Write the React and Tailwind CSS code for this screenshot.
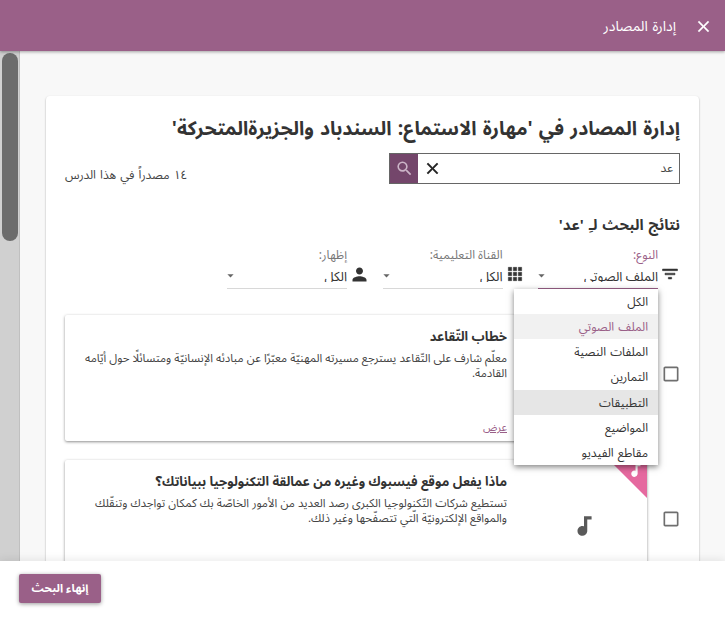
import React from "react";
import { MdSearch, MdPerson, MdAudiotrack, MdArrowDropDown, MdCheckBoxOutlineBlank } from "react-icons/md";

const options = ["الكل", "الملف الصوتي", "الملفات النصية", "التمارين", "التطبيقات", "المواضيع", "مقاطع الفيديو"];

function Icon({ d, size = 20, weight = 0.6, className = "" }) {
  return (
    <svg viewBox="0 0 24 24" width={size} height={size} fill="currentColor" stroke="currentColor" strokeWidth={weight} className={className}>
      <path d={d} />
    </svg>
  );
}

const CLOSE = "M19 6.41 17.59 5 12 10.59 6.41 5 5 6.41 10.59 12 5 17.59 6.41 19 12 13.41 17.59 19 19 17.59 13.41 12z";
const FILTER = "M10 18h4v-2h-4v2zM3 6v2h18V6H3zm3 7h12v-2H6v2z";
const APPS = "M4 8h4V4H4v4zm6 12h4v-4h-4v4zm-6 0h4v-4H4v4zm0-6h4v-4H4v4zm6 0h4v-4h-4v4zm6-10v4h4V4h-4zm-6 4h4V4h-4v4zm6 6h4v-4h-4v4zm0 6h4v-4h-4v4z";

function Filter({ icon, label, value, active, children }) {
  return (
    <div className="flex items-start gap-[2px]">
      <div className="mt-[19px] w-[20px] text-[#333]">{icon}</div>
      <div className="relative w-[120px]">
        <div className={`h-[19px] pt-px text-[12px] leading-[19px] whitespace-nowrap ${active ? "text-[#9a6088]" : "text-[#777]"}`}>{label}</div>
        <div className={`flex h-[25px] items-start justify-between border-b ${active ? "border-[#9a6088]" : "border-[#d8d8d8]"}`}>
          <span className="h-[18px] overflow-hidden text-[13px] leading-[26px] whitespace-nowrap text-[#333]">{value}</span>
          <MdArrowDropDown size={15} className="mt-[4px] -ml-[4px] text-[#666]" />
        </div>
        {children}
      </div>
    </div>
  );
}

function Resource({ title, lines, link }) {
  return (
    <div className="flex h-[126px] items-center justify-between">
      <MdCheckBoxOutlineBlank size={20} className="mb-[9px] -mr-px text-[#6f6f6f]" />
      <div className="relative flex h-full w-[582px] rounded-[2px] bg-white shadow-[0_1px_3px_rgba(0,0,0,0.45)]">
        <div className="flex w-[140px] items-center justify-center pt-[6px] pl-[13px]">
          <MdAudiotrack size={26} className="text-[#5a5a5a]" />
        </div>
        <div className="absolute top-0 right-0 h-[38px] w-[38px] bg-[#e5699f] [clip-path:polygon(0_0,100%_0,100%_100%)]">
          <MdAudiotrack size={17} className="absolute top-[2px] right-[3px] text-white" />
        </div>
        <div className="flex flex-1 flex-col pt-[11px]">
          <h3 className="text-[13px] leading-[22px] font-bold whitespace-nowrap text-[#333]">{title}</h3>
          <p className="pt-[3px] text-[11.5px] leading-[14.5px] whitespace-nowrap text-[#444] [word-spacing:0.15px]">
            {lines.map((l) => <span key={l} className="block">{l}</span>)}
          </p>
          <a className="mt-auto mb-[6px] text-[11px] leading-[15px] text-[#9a6088] underline">{link}</a>
        </div>
      </div>
    </div>
  );
}

export default function App() {
  return (
    <div className="flex h-[619px] w-[725px] flex-col overflow-hidden bg-white font-['Noto_Sans_Arabic','Noto_Sans','Open_Sans',sans-serif]">
      <header dir="rtl" className="z-10 flex h-[51px] shrink-0 items-center gap-[18px] bg-[#9a6088] pt-px pr-[12px] text-white shadow-[0_1px_3px_rgba(0,0,0,0.35)]">
        <Icon d={CLOSE} size={19} weight={0.4} />
        <span className="pt-px text-[14px] leading-[22px] [word-spacing:1px]">إدارة المصادر</span>
      </header>
      <div className="flex h-[510px] shrink-0 overflow-hidden">
        <div className="w-[20px] border-r border-[#c0c0c0] bg-[#d0d0d0] pt-[2px] pl-[2px]">
          <div className="h-[188px] w-[16px] rounded-full bg-[#6c6c6c]" />
        </div>
        <main dir="rtl" className="flex-1 bg-[#f8f8f8] px-[26px] pt-[45px]">
          <section className="h-[520px] rounded-[4px] bg-white px-[19px] pt-[17px] shadow-[0_1px_2px_rgba(0,0,0,0.35)]">
            <h1 className="h-[40px] text-[19.4px] leading-[32px] font-bold whitespace-nowrap text-[#333] [word-spacing:1.1px]">إدارة المصادر في 'مهارة الاستماع: السندباد والجزيرةالمتحركة'</h1>
            <div className="flex h-[31px] justify-between">
              <div className="flex h-[31px] w-[291px] items-center border border-[#666] pr-[6px]">
                <span className="flex-1 pt-px text-[12px] text-[#444]">عد</span>
                <Icon d={CLOSE} size={19} weight={0.7} className="ml-[5px] text-[#222]" />
                <div className="flex h-full w-[28px] items-center justify-center bg-[#74466b] pl-px text-[#ccb5c8]"><MdSearch size={19} /></div>
              </div>
              <span className="pt-[13px] text-[12px] leading-[20px] whitespace-nowrap text-[#444] [word-spacing:1px]">١٤ مصدراً في هذا الدرس</span>
            </div>
            <h2 className="mt-[29px] h-[32px] text-[15px] leading-[25px] font-bold text-[#333] [word-spacing:1px]">نتائج البحث لـِ 'عد'</h2>
            <div className="flex h-[70px] gap-[13.5px]">
              <Filter icon={<Icon d={FILTER} />} label="النوع:" value="الملف الصوتي" active>
                <ul className="absolute top-[44px] right-0 z-20 w-[144px] bg-white shadow-[0_2px_6px_rgba(0,0,0,0.5)]">
                  {options.map((o, i) => (
                    <li key={o} className={`h-[25.15px] pr-[10px] text-[12px] leading-[27px] whitespace-nowrap [word-spacing:1px] ${i === 1 ? "bg-[#f1f1f1] text-[#9a6088]" : i === 4 ? "bg-[#e6e6e6] text-[#333]" : "text-[#333]"}`}>{o}</li>
                  ))}
                </ul>
              </Filter>
              <Filter icon={<Icon d={APPS} />} label="القناة التعليمية:" value="الكل" />
              <Filter icon={<MdPerson size={21} className="-mr-px" />} label="إظهار:" value="الكل" />
            </div>
            <div className="flex flex-col gap-[19px]">
              <Resource title="خطاب التّقاعد" lines={["معلّم شارف على التّقاعد يسترجع مسيرته المهنيّة معبّرًا عن مبادئه الإنسانيّة ومتسائلًا حول أيّامه", "القادمة."]} link="عرض" />
              <Resource title="ماذا يفعل موقع فيسبوك وغيره من عمالقة التكنولوجيا ببياناتك؟" lines={["تستطيع شركات التّكنولوجيا الكبرى رصد العديد من الأمور الخاصّة بك كمكان تواجدك وتنقّلك", "والمواقع الإلكترونيّة الّتي تتصفّحها وغير ذلك."]} link="عرض" />
            </div>
          </section>
        </main>
      </div>
      <footer className="z-10 flex flex-1 items-start bg-white pt-[13px] pl-[19px] shadow-[0_-2px_8px_rgba(0,0,0,0.08)]">
        <button dir="rtl" className="h-[29px] w-[82px] rounded-[2px] bg-[#9a6088] pt-px text-[11.5px] font-bold whitespace-nowrap text-white shadow-[0_1px_4px_rgba(0,0,0,0.4)]">إنهاء البحث</button>
      </footer>
    </div>
  );
}
